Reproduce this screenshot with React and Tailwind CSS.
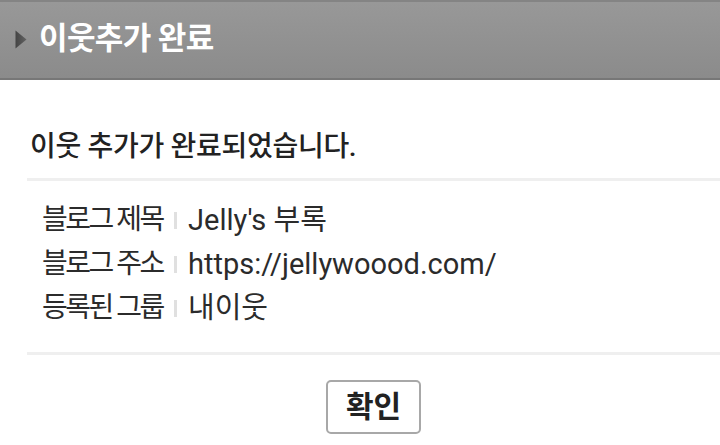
export default function App() {
  const rows = [
    ['블로그 제목', "Jelly's 부록"],
    ['블로그 주소', 'https://jellywoood.com/'],
    ['등록된 그룹', '내이웃'],
  ]

  return (
    <div className="w-[720px] h-[445px] overflow-hidden bg-white font-['Roboto','Noto_Sans_CJK_KR',sans-serif]">
      {/* Header */}
      <div className="h-[80px] flex items-center gap-[12px] pl-[15px] border-t-2 border-t-[#848484] border-b-2 border-b-[#777] bg-gradient-to-b from-[#989898] to-[#8b8b8b]">
        <svg width="12" height="19" viewBox="0 0 12 19" className="mt-[-2px]">
          <defs>
            <linearGradient id="tri" x1="0" y1="0" x2="1" y2="0">
              <stop offset="0" stopColor="#444" />
              <stop offset="1" stopColor="#626262" />
            </linearGradient>
          </defs>
          <path d="M0.5 0.5 L11.5 9.5 L0.5 18.5 Z" fill="url(#tri)" />
        </svg>
        <h1 className="text-white text-[31px] font-bold leading-none tracking-[-0.6px] mt-[-4px]">이웃추가 완료</h1>
      </div>

      {/* Body */}
      <div className="pl-[27px]">
        <p className="pt-[49px] pl-[3px] pb-[13px] text-[28px] font-medium text-[#222] leading-[36px] tracking-[-0.3px]">
          이웃 추가가 완료되었습니다.
        </p>
        <div className="border-t-[3px] border-[#efefef]" />

        <div className="pt-[17px] pb-[22px] pl-[15px] flex flex-col">
          {rows.map(([label, value]) => (
            <div key={label} className="h-[44px] flex items-center text-[28px] leading-none text-[#2b2b2b]">
              <span className="w-[132px] tracking-[-2.5px] whitespace-nowrap">{label}</span>
              <span className="w-[3px] h-[17px] bg-[#e0e0e0] mr-[11px]" />
              <span className="text-[29px]">{value}</span>
            </div>
          ))}
        </div>

        <div className="border-t-[3px] border-[#efefef]" />

        <div className="flex justify-center pt-[25px]">
          <button className="w-[95px] h-[54px] border-2 border-[#a8a8a8] rounded-[5px] bg-white text-[30px] font-bold text-[#222] leading-none">
            확인
          </button>
        </div>
      </div>
    </div>
  )
}
